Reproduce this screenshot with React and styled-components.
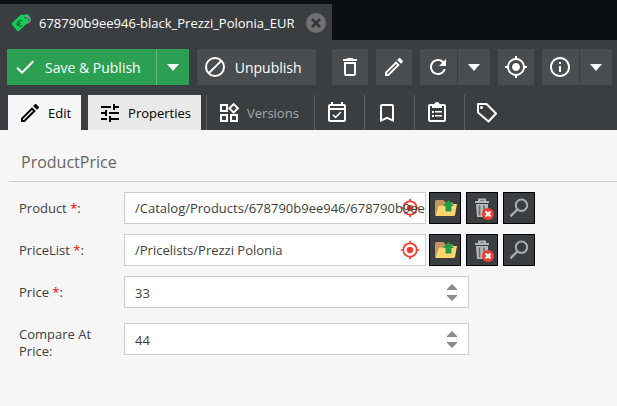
import React from "react";
import styled, { createGlobalStyle } from "styled-components";
import {
  MdCheck,
  MdDeleteOutline,
  MdOutlineEdit,
  MdRefresh,
  MdMyLocation,
  MdInfoOutline,
  MdTune,
  MdOutlineWidgets,
  MdOutlineEventAvailable,
  MdBookmarkBorder,
} from "react-icons/md";

const App = () => {
  const [price, setPrice] = React.useState(33);
  const [compare, setCompare] = React.useState(44);

  return (
    <Page>
      <Global />
      <TabStrip>
        <ObjectTab>
          <PriceTagIcon />
          <TabTitle>678790b9ee946-black_Prezzi_Polonia_EUR</TabTitle>
          <CloseButton aria-label="Close tab">
            <svg width="10" height="10" viewBox="0 0 10 10">
              <path d="M1 1 9 9M9 1 1 9" stroke="#33373a" strokeWidth="2.6" />
            </svg>
          </CloseButton>
        </ObjectTab>
      </TabStrip>

      <Toolbar>
        <Split>
          <SaveButton>
            <MdCheck size={24} />
            Save &amp; Publish
          </SaveButton>
          <ArrowButton $green aria-label="More save options">
            <Caret />
          </ArrowButton>
        </Split>
        <UnpublishButton>
          <UnpublishIcon />
          Unpublish
        </UnpublishButton>
        <Tools>
          <IconButton aria-label="Delete">
            <MdDeleteOutline size={24} />
          </IconButton>
          <IconButton aria-label="Rename">
            <MdOutlineEdit size={24} />
          </IconButton>
          <Split>
            <IconButton aria-label="Reload">
              <MdRefresh size={24} />
            </IconButton>
            <ArrowButton aria-label="Reload options">
              <Caret />
            </ArrowButton>
          </Split>
          <IconButton aria-label="Show in tree">
            <MdMyLocation size={24} />
          </IconButton>
          <Split>
            <IconButton aria-label="Info">
              <MdInfoOutline size={24} />
            </IconButton>
            <ArrowButton aria-label="Info options">
              <Caret />
            </ArrowButton>
          </Split>
        </Tools>
      </Toolbar>

      <Tabs>
        <LightTab>
          <MdOutlineEdit size={24} />
          Edit
        </LightTab>
        <LightTab $hover>
          <MdTune size={24} />
          Properties
        </LightTab>
        <DarkTab>
          <MdOutlineWidgets size={24} />
          Versions
        </DarkTab>
        <DarkTab aria-label="Schedule">
          <MdOutlineEventAvailable size={24} />
        </DarkTab>
        <DarkTab aria-label="Dependencies">
          <MdBookmarkBorder size={24} />
        </DarkTab>
        <DarkTab aria-label="Notes">
          <NotesIcon />
        </DarkTab>
        <DarkTab aria-label="Tags">
          <TagIcon />
        </DarkTab>
      </Tabs>

      <Content>
        <Heading>ProductPrice</Heading>
        <Fields>
          <RelationField
            id="product"
            label="Product"
            value="/Catalog/Products/678790b9ee946/678790b9ee946"
          />
          <RelationField id="pricelist" label="PriceList" value="/Pricelists/Prezzi Polonia" />
          <NumberField id="price" label="Price" required value={price} onChange={setPrice} />
          <NumberField
            id="compare"
            label="Compare At Price"
            tall
            value={compare}
            onChange={setCompare}
          />
        </Fields>
      </Content>
    </Page>
  );
};
export default App;

const RelationField = ({ id, label, value }) => (
  <Row>
    <Label htmlFor={id}>
      {label} <Star>*</Star>:
    </Label>
    <RelationBox>
      <Target>
        <MdMyLocation size={20} />
      </Target>
      <RelationInput id={id} defaultValue={value} />
    </RelationBox>
    <Actions>
      <ActionButton aria-label={`Open ${label}`}>
        <FolderIcon />
      </ActionButton>
      <ActionButton aria-label={`Empty ${label}`}>
        <TrashIcon />
      </ActionButton>
      <ActionButton aria-label={`Search ${label}`}>
        <SearchIcon />
      </ActionButton>
    </Actions>
  </Row>
);

const NumberField = ({ id, label, required, tall, value, onChange }) => (
  <Row $tall={tall}>
    {required ? (
      <Label htmlFor={id}>
        {label} <Star>*</Star>:
      </Label>
    ) : (
      <Label htmlFor={id}>{`${label}:`}</Label>
    )}
    <NumberBox>
      <NumberInput
        id={id}
        inputMode="decimal"
        value={value}
        onChange={(e) => onChange(Number(e.target.value) || 0)}
      />
      <Spinner>
        <SpinButton aria-label={`Increase ${label}`} onClick={() => onChange(value + 1)}>
          <svg width="10" height="6" viewBox="0 0 10 6">
            <path d="M0 6V5L5 0 10 5V6Z" fill="#8c8c8c" />
          </svg>
        </SpinButton>
        <SpinButton aria-label={`Decrease ${label}`} onClick={() => onChange(value - 1)}>
          <svg width="10" height="6" viewBox="0 0 10 6">
            <path d="M0 0V1L5 6 10 1V0Z" fill="#8c8c8c" />
          </svg>
        </SpinButton>
      </Spinner>
    </NumberBox>
  </Row>
);

const Caret = () => (
  <svg width="12" height="7" viewBox="0 0 12 7">
    <path d="M0 0H12L6 7Z" fill="#fff" />
  </svg>
);

const UnpublishIcon = () => (
  <svg width="24" height="24" viewBox="0 0 24 24" fill="none" stroke="#fff" strokeWidth="2">
    <circle cx="12" cy="12" r="9" />
    <path d="M5.6 18.4 18.4 5.6" />
  </svg>
);

const NotesIcon = () => (
  <svg width="24" height="24" viewBox="0 0 24 24">
    <path
      d="M19 3h-4.2a3 3 0 0 0-5.6 0H5a2 2 0 0 0-2 2v14c0 1.1.9 2 2 2h14a2 2 0 0 0 2-2V5a2 2 0 0 0-2-2ZM19 19H5V5h2v2h10V5h2Z"
      fill="#fff"
    />
    <path
      d="M7 10h2v2H7zM7 14h2v2H7zM10 10h7v1.5h-7zM10 14h7v1.5h-7z"
      fill="#fff"
    />
  </svg>
);

const TagIcon = () => (
  <svg width="24" height="24" viewBox="0 0 24 24">
    <path
      d="M3 3h8.5l9.5 9.5-7.500 8L3 11.500Z"
      fill="none"
      stroke="#fff"
      strokeWidth="2"
      strokeLinejoin="round"
    />
    <circle cx="6.500" cy="6.500" r="1.500" fill="#fff" />
  </svg>
);

const PriceTagIcon = () => (
  <svg width="20" height="20" viewBox="0 0 20 20">
    <path d="M9.5 2 17.5 1.200 17.800 8.800 7 18.800.3 10.800Z" fill="#10cf55" />
    <circle cx="14.700" cy="4.500" r="1.300" fill="#3a3e41" />
    <path
      d="M14 4.500c2-2 5.300-1 5.300 2s-3 4.300-5 2.700"
      fill="none"
      stroke="#8f9496"
      strokeWidth="1.300"
    />
    <path
      d="M11 12.500c-2 1.600-4.800.2-4.900-2.100M11.500 8.200c-1.600-1.700-4.500-.7-4.800 1.300M5.300 11.300l4-2.800M6 12.700l3.600-2.600"
      fill="none"
      stroke="#176b36"
      strokeWidth="1.100"
    />
  </svg>
);

const FolderIcon = () => (
  <svg width="24" height="24" viewBox="0 0 24 24">
    <path d="M2 19V5.500Q2 4 3.500 4h7l2 2.500H20V19Z" fill="#c09560" />
    <path d="M2.500 20 5.500 10.500q.3-1 1.300-1h4.700l2-1.500H24l-2 11q-.2 1-1.500 1H3Z" fill="#fcd56c" />
    <path d="M15.500 4 21 10H18.500v5.500h-6V10H10Z" fill="#219c49" />
  </svg>
);

const TrashIcon = () => (
  <svg width="24" height="24" viewBox="0 0 24 24">
    <path d="M9 5V3.500h6V5M5 6h14" fill="none" stroke="#b5b7b8" strokeWidth="2" />
    <path d="M6 8h12v13H7Z" fill="#b5b7b8" />
    <path d="M9.500 9.500v10M14 9.500v10" stroke="#696d70" strokeWidth="1.600" />
    <circle cx="18" cy="18" r="6" fill="#f43b2d" />
    <path d="m15.500 15.500 5 5m0-5-5 5" stroke="#fff" strokeWidth="2.200" />
  </svg>
);

const SearchIcon = () => (
  <svg width="24" height="24" viewBox="0 0 24 24" fill="none" stroke="#a9abac">
    <circle cx="14.500" cy="9.300" r="5.700" strokeWidth="2" />
    <path d="M10.300 13.500 3.500 20.300" strokeWidth="2.400" />
  </svg>
);

const Global = createGlobalStyle`
  * {
    box-sizing: border-box;
  }
  body {
    margin: 0;
    background: #f6f6f6;
  }
  body, button, input {
    font-family: "Open Sans", sans-serif;
    font-size: 13px;
  }
  button {
    border: 0;
    padding: 0;
    cursor: pointer;
  }
  svg {
    display: block;
    flex: none;
  }
`;
const Page = styled.div`
  min-height: 100vh;
  color: #404040;
`;
const TabStrip = styled.div`
  display: flex;
  padding-top: 4px;
  background: #0c0f12;
`;
const ObjectTab = styled.div`
  display: flex;
  align-items: center;
  gap: 8px;
  height: 36px;
  padding: 2px 6px 0 11px;
  background: #3a3e41;
`;
const TabTitle = styled.span`
  color: #fff;
  white-space: nowrap;
`;
const CloseButton = styled.button`
  display: flex;
  align-items: center;
  justify-content: center;
  width: 20px;
  height: 20px;
  margin-left: 3px;
  border-radius: 50%;
  background: #707070;
`;
const Toolbar = styled.div`
  display: flex;
  gap: 8px;
  padding: 9px 5px 10px 7px;
  background: #3a3e41;
`;
const Tools = styled.div`
  display: flex;
  gap: 8px;
  margin-left: 8px;
`;
const Split = styled.div`
  display: flex;
  gap: 1px;
`;
const IconButton = styled.button`
  display: flex;
  align-items: center;
  justify-content: center;
  width: 36px;
  height: 36px;
  background: #494d50;
  color: #fff;
  ${Split} > & {
    width: 37px;
  }
`;
const ArrowButton = styled(IconButton)`
  ${Split} > & {
    width: 32px;
  }
  background: ${(props) => (props.$green ? "#2ba052" : "#494d50")};
`;
const TextButton = styled(IconButton)`
  justify-content: flex-start;
  gap: 8px;
  padding: 0 14px 0 6px;
  font-size: 14px;
  white-space: nowrap;
`;
const SaveButton = styled(TextButton)`
  ${Split} > & {
    width: auto;
  }
  background: #2ba052;
  padding: 0 15px 0 6px;
  box-shadow: 1px 0 #66bb80;
`;
const UnpublishButton = styled(TextButton)`
  width: auto;
`;
const Tabs = styled.div`
  display: flex;
  padding-left: 8px;
  background: #3a3e41;
`;
const LightTab = styled.button`
  display: flex;
  align-items: center;
  gap: 6px;
  height: 35px;
  padding: 0 10px;
  background: ${(props) => (props.$hover ? "#e9e9e9" : "#f6f6f6")};
  color: #000;
  & + & {
    margin: 0 5px 0 7px;
  }
`;
const DarkTab = styled.button`
  display: flex;
  align-items: center;
  gap: 6px;
  height: 35px;
  padding: 0 15px 0 10px;
  border-left: 1px solid #5d6163;
  background: none;
  color: #a8aaab;
  svg {
    color: #fff;
  }
`;
const Content = styled.main`
  padding: 20px 0 16px 9px;
`;
const Heading = styled.h1`
  margin: 0;
  padding: 0 12px 7px;
  border-bottom: 1px solid #cfcfcf;
  color: #666;
  font-size: 16px;
  font-weight: 400;
  line-height: 24px;
`;
const Fields = styled.div`
  display: flex;
  flex-direction: column;
  gap: 10px;
  padding: 10px 10px 0;
`;
const Row = styled.div`
  display: flex;
  padding-top: ${(props) => (props.$tall ? "5px" : "0")};
`;
const Label = styled.label`
  flex: none;
  width: 105px;
  padding: 8px 20px 0 0;
  line-height: 17px;
  ${Row}:last-child > & {
    padding-top: 3px;
  }
`;
const Star = styled.span`
  color: red;
`;
const RelationBox = styled.div`
  position: relative;
  width: 302px;
  height: 32px;
  border: 1px solid #cfcfcf;
  background: #fff;
`;
const Target = styled.span`
  position: absolute;
  top: 5px;
  right: 5px;
  color: #f43b2d;
`;
const RelationInput = styled.input`
  position: relative;
  width: 100%;
  height: 30px;
  padding: 0 0 0 10px;
  border: 0;
  background: transparent;
  color: #404040;
`;
const Actions = styled.div`
  display: flex;
  gap: 5px;
  margin-left: 3px;
`;
const ActionButton = styled.button`
  display: flex;
  align-items: center;
  justify-content: center;
  width: 32px;
  height: 32px;
  border: 1px solid #000;
  background: #3a3e41;
`;
const NumberBox = styled.div`
  display: flex;
  width: 345px;
  height: 32px;
  border: 1px solid #cfcfcf;
  background: #fff;
`;
const NumberInput = styled.input`
  flex: 1;
  min-width: 0;
  padding: 2px 0 0 10px;
  border: 0;
  background: transparent;
  color: #404040;
`;
const Spinner = styled.div`
  display: flex;
  flex-direction: column;
  justify-content: center;
  width: 32px;
`;
const SpinButton = styled.button`
  display: flex;
  align-items: center;
  justify-content: center;
  height: 11px;
  background: none;
`;
